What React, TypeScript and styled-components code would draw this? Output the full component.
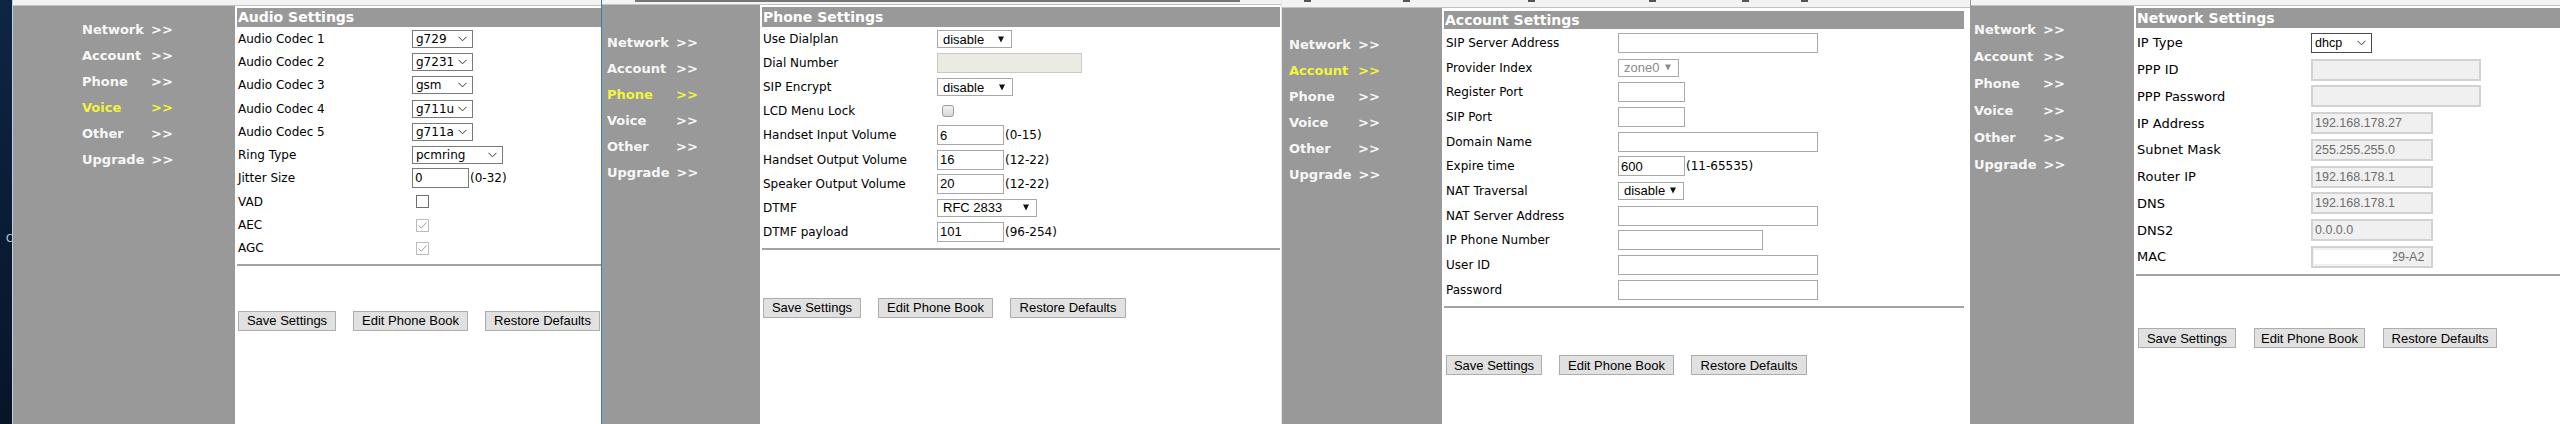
import { FC } from 'react';
import styled, { createGlobalStyle, css } from 'styled-components';

const GlobalStyle = createGlobalStyle`
  html, body {
    margin: 0;
    padding: 0;
    background: #fff;
    overflow: hidden;
  }
  * {
    box-sizing: border-box;
  }
`;

type Look = 'win10' | 'legacy' | 'flat';

type Ctl =
  | { kind: 'select'; value: string; w: number; disabled?: boolean }
  | { kind: 'input'; value?: string; w: number; hint?: string; disabled?: boolean }
  | { kind: 'check'; checked?: boolean; disabled?: boolean }
  | { kind: 'mac'; value: string; w: number };

type Field = { label: string; ctl: Ctl };

type PanelCfg = {
  width: number;
  desktop?: boolean;
  edge: string;
  strip: number;
  marks?: 'bar' | 'ticks';
  sideW: number;
  navTop: number;
  navLeft: number;
  navPitch: number;
  active?: string;
  title: string;
  headTop: number;
  headH: number;
  padRight: number;
  rowsTop: number;
  pitch: number;
  labelPad: number;
  labelW: number;
  font: number;
  ctlFont: string;
  look: Look;
  selH: number;
  inH: number;
  fields: Field[];
  btnTop: number;
  btnPad: number;
  btnW: number[];
  btnGap: number;
};

const Strip = styled.div`
  display: flex;
  width: 2560px;
  height: 424px;
  overflow: hidden;
  font-family: 'DejaVu Sans', Verdana, sans-serif;
`;

const Shot = styled.div<{ $w: number }>`
  flex: none;
  width: ${(p) => p.$w}px;
  height: 424px;
  display: flex;
  overflow: hidden;
`;

const Desktop = styled.div`
  flex: none;
  width: 12px;
  padding-top: 233px;
  background: linear-gradient(180deg, #0e2544 0%, #0a1c35 55%, #071528 100%);
  color: #c9d2de;
  font: 10px 'DejaVu Sans', sans-serif;
  text-indent: 6px;
  white-space: nowrap;
  overflow: hidden;
`;

const Window = styled.div<{ $edge: string }>`
  flex: 1;
  min-width: 0;
  display: flex;
  flex-direction: column;
  border-left: 1px solid ${(p) => p.$edge};
`;

const TitleStrip = styled.div<{ $h: number }>`
  flex: none;
  position: relative;
  height: ${(p) => p.$h}px;
  background: #f3f3f3;
  border-bottom: 1px solid #c2c2c2;
`;

const StripBar = styled.div`
  position: absolute;
  top: 0;
  left: 33px;
  width: 605px;
  height: 2px;
  background: #767676;
`;

const Tick = styled.div<{ $x: number }>`
  position: absolute;
  top: 0;
  left: ${(p) => p.$x}px;
  width: 7px;
  height: 2px;
  background: #555;
`;

const Body = styled.div`
  flex: 1;
  display: flex;
  min-height: 0;
`;

const Sidebar = styled.nav<{ $w: number; $top: number; $left: number }>`
  flex: none;
  width: ${(p) => p.$w}px;
  background: #999999;
  padding-top: ${(p) => p.$top}px;
  padding-left: ${(p) => p.$left}px;
`;

const NavItem = styled.div<{ $h: number; $active: boolean }>`
  height: ${(p) => p.$h}px;
  display: flex;
  align-items: center;
  font-weight: bold;
  font-size: 13px;
  white-space: nowrap;
  color: ${(p) => (p.$active ? '#f4f43a' : '#f7f7f7')};
`;

const NavName = styled.span`
  display: inline-block;
  min-width: 69px;
  padding-right: 7px;
`;

const Content = styled.div<{ $padRight: number }>`
  flex: 1;
  min-width: 0;
  background: #fff;
  padding-left: 2px;
  padding-right: ${(p) => p.$padRight}px;
  display: flex;
  flex-direction: column;
`;

const Header = styled.div<{ $top: number; $h: number }>`
  flex: none;
  margin-top: ${(p) => p.$top}px;
  height: ${(p) => p.$h}px;
  line-height: ${(p) => p.$h}px;
  background: #999999;
  color: #fff;
  font-weight: bold;
  font-size: 14px;
  padding-left: 1px;
  white-space: nowrap;
`;

const Rows = styled.div<{ $top: number; $pad: number }>`
  margin-top: ${(p) => p.$top}px;
  padding-left: ${(p) => p.$pad}px;
`;

const Row = styled.div<{ $h: number }>`
  height: ${(p) => p.$h}px;
  display: flex;
  align-items: center;
`;

const Label = styled.div<{ $w: number; $size: number }>`
  flex: none;
  width: ${(p) => p.$w}px;
  font-size: ${(p) => p.$size}px;
  color: #000;
  white-space: nowrap;
`;

const Cell = styled.div<{ $size: number }>`
  display: flex;
  align-items: center;
  font-size: ${(p) => p.$size}px;
  color: #000;
  white-space: nowrap;
`;

const SelectBox = styled.div<{ $w: number; $h: number; $look: Look; $font: string; $off?: boolean }>`
  width: ${(p) => p.$w}px;
  height: ${(p) => p.$h}px;
  display: flex;
  align-items: center;
  justify-content: space-between;
  gap: 2px;
  background: #fff;
  font-family: ${(p) => p.$font};
  color: ${(p) => (p.$off ? '#8a8a8a' : '#000')};
  ${(p) =>
    p.$look === 'legacy'
      ? css`
          border: 1px solid #a9a9a9;
          padding: 0 7px 0 5px;
          font-size: 13px;
        `
      : css`
          border: 1px solid ${p.$look === 'flat' ? '#4a4a4a' : '#7a7a7a'};
          padding: 0 5px 0 3px;
          font-size: ${p.$look === 'flat' ? '12.5px' : '12px'};
        `}
`;

const TextBox = styled.input<{ $w: number; $h: number; $look: Look; $font: string; $off?: boolean }>`
  width: ${(p) => p.$w}px;
  height: ${(p) => p.$h}px;
  margin: 0;
  padding: 0 2px;
  outline: none;
  font-family: ${(p) => p.$font};
  font-size: ${(p) => (p.$look === 'legacy' ? '13px' : p.$look === 'flat' ? '12.5px' : '12px')};
  color: ${(p) => (p.$off ? '#6d6d6d' : '#000')};
  background: ${(p) => (p.$off ? (p.$look === 'legacy' ? '#ebebe4' : '#f0f0f0') : '#fff')};
  border: 1px solid
    ${(p) => (p.$look === 'win10' ? '#7a7a7a' : p.$off ? '#c8c8c8' : '#a9a9a9')};
  ${(p) =>
    p.$look === 'flat' &&
    css`
      border-width: 2px;
      border-color: #d2d2d2;
    `}
`;

const Hint = styled.span`
  margin-left: 1px;
`;

const MacWrap = styled.div`
  position: relative;
  display: flex;
`;

const Redaction = styled.div`
  position: absolute;
  left: 3px;
  top: 4px;
  width: 79px;
  height: 14px;
  background: #fff;
  filter: blur(0.6px);
`;

const CheckBox = styled.span<{ $look: Look; $off?: boolean }>`
  display: inline-flex;
  align-items: center;
  justify-content: center;
  ${(p) =>
    p.$look === 'legacy'
      ? css`
          width: 12px;
          height: 12px;
          margin-left: 5px;
          border: 1px solid #9a9a9a;
          border-radius: 3px;
          background: linear-gradient(180deg, #f2f2f2, #d9d9d9);
        `
      : css`
          width: 13px;
          height: 13px;
          margin-left: 4px;
          border: 1px solid ${p.$off ? '#bcbcbc' : '#6f6f6f'};
          background: #fff;
        `}
`;

const Divider = styled.div`
  flex: none;
  margin-top: 4px;
  height: 2px;
  background: #a2a2a2;
`;

const ButtonRow = styled.div<{ $top: number; $pad: number; $gap: number }>`
  display: flex;
  gap: ${(p) => p.$gap}px;
  margin-top: ${(p) => p.$top}px;
  padding-left: ${(p) => p.$pad}px;
`;

const Button = styled.button<{ $w: number }>`
  width: ${(p) => p.$w}px;
  height: 20px;
  margin: 0;
  padding: 0;
  border: 1px solid #adadad;
  background: #e1e1e1;
  color: #000;
  font: 13px 'Liberation Sans', Arial, sans-serif;
  white-space: nowrap;
`;

const Chevron: FC<{ look: Look; off?: boolean }> = ({ look, off }) =>
  look === 'legacy' ? (
    <svg width="6" height="7" viewBox="0 0 6 7">
      <path d="M0 0.5 H6 L3 6.5 Z" fill={off ? '#8a8a8a' : '#111'} />
    </svg>
  ) : (
    <svg width="9" height="6" viewBox="0 0 9 6">
      <path d="M0.5 0.8 L4.5 4.8 L8.5 0.8" fill="none" stroke="#333" strokeWidth="1" />
    </svg>
  );

const Control: FC<{ ctl: Ctl; cfg: PanelCfg }> = ({ ctl, cfg }) => {
  if (ctl.kind === 'select') {
    return (
      <SelectBox $w={ctl.w} $h={cfg.selH} $look={cfg.look} $font={cfg.ctlFont} $off={ctl.disabled}>
        <span>{ctl.value}</span>
        <Chevron look={cfg.look} off={ctl.disabled} />
      </SelectBox>
    );
  }
  if (ctl.kind === 'input') {
    return (
      <>
        <TextBox
          $w={ctl.w}
          $h={cfg.inH}
          $look={cfg.look}
          $font={cfg.ctlFont}
          $off={ctl.disabled}
          value={ctl.value ?? ''}
          readOnly
        />
        {ctl.hint && <Hint>{ctl.hint}</Hint>}
      </>
    );
  }
  if (ctl.kind === 'mac') {
    // mac address is blanked out in the original, only the tail shows
    return (
      <MacWrap>
        <TextBox
          $w={ctl.w}
          $h={cfg.inH}
          $look={cfg.look}
          $font={cfg.ctlFont}
          $off
          value={ctl.value}
          readOnly
          style={{ textIndent: 76 }}
        />
        <Redaction />
      </MacWrap>
    );
  }
  return (
    <CheckBox $look={cfg.look} $off={ctl.disabled}>
      {ctl.checked && (
        <svg width="11" height="11" viewBox="0 0 11 11">
          <path d="M1.5 5.5 L4.2 8.2 L9.5 2.5" fill="none" stroke="#a0a0a0" strokeWidth="1" />
        </svg>
      )}
    </CheckBox>
  );
};

const NAV = ['Network', 'Account', 'Phone', 'Voice', 'Other', 'Upgrade'];
const TICKS = [22, 121, 246, 367, 460, 519];
const BUTTONS = ['Save Settings', 'Edit Phone Book', 'Restore Defaults'];

const Panel: FC<{ cfg: PanelCfg }> = ({ cfg }) => (
  <Shot $w={cfg.width}>
    {cfg.desktop && <Desktop>C</Desktop>}
    <Window $edge={cfg.edge}>
      <TitleStrip $h={cfg.strip}>
        {cfg.marks === 'bar' && <StripBar />}
        {cfg.marks === 'ticks' && TICKS.map((x) => <Tick key={x} $x={x} />)}
      </TitleStrip>
      <Body>
        <Sidebar $w={cfg.sideW} $top={cfg.navTop} $left={cfg.navLeft}>
          {NAV.map((n) => (
            <NavItem key={n} $h={cfg.navPitch} $active={n === cfg.active}>
              <NavName>{n}</NavName>
              &gt;&gt;
            </NavItem>
          ))}
        </Sidebar>
        <Content $padRight={cfg.padRight}>
          <Header $top={cfg.headTop} $h={cfg.headH}>
            {cfg.title}
          </Header>
          <Rows $top={cfg.rowsTop} $pad={cfg.labelPad}>
            {cfg.fields.map((f) => (
              <Row key={f.label} $h={cfg.pitch}>
                <Label $w={cfg.labelW} $size={cfg.font}>
                  {f.label}
                </Label>
                <Cell $size={cfg.font}>
                  <Control ctl={f.ctl} cfg={cfg} />
                </Cell>
              </Row>
            ))}
          </Rows>
          <Divider />
          <ButtonRow $top={cfg.btnTop} $pad={cfg.btnPad} $gap={cfg.btnGap}>
            {BUTTONS.map((b, i) => (
              <Button key={b} $w={cfg.btnW[i]}>
                {b}
              </Button>
            ))}
          </ButtonRow>
        </Content>
      </Body>
    </Window>
  </Shot>
);

const VERDANA = "'DejaVu Sans', Verdana, sans-serif";
const ARIAL = "'Liberation Sans', Arial, sans-serif";

const PANELS: PanelCfg[] = [
  {
    width: 601,
    desktop: true,
    edge: '#c3cfdd',
    strip: 6,
    sideW: 222,
    navTop: 10,
    navLeft: 69,
    navPitch: 26,
    active: 'Voice',
    title: 'Audio Settings',
    headTop: 2,
    headH: 19,
    padRight: 0,
    rowsTop: 0,
    pitch: 23.3,
    labelPad: 1,
    labelW: 174,
    font: 12,
    ctlFont: VERDANA,
    look: 'win10',
    selH: 18,
    inH: 20,
    fields: [
      { label: 'Audio Codec 1', ctl: { kind: 'select', value: 'g729', w: 61 } },
      { label: 'Audio Codec 2', ctl: { kind: 'select', value: 'g7231', w: 61 } },
      { label: 'Audio Codec 3', ctl: { kind: 'select', value: 'gsm', w: 61 } },
      { label: 'Audio Codec 4', ctl: { kind: 'select', value: 'g711u', w: 61 } },
      { label: 'Audio Codec 5', ctl: { kind: 'select', value: 'g711a', w: 61 } },
      { label: 'Ring Type', ctl: { kind: 'select', value: 'pcmring', w: 91 } },
      { label: 'Jitter Size', ctl: { kind: 'input', value: '0', w: 57, hint: '(0-32)' } },
      { label: 'VAD', ctl: { kind: 'check' } },
      { label: 'AEC', ctl: { kind: 'check', checked: true, disabled: true } },
      { label: 'AGC', ctl: { kind: 'check', checked: true, disabled: true } },
    ],
    btnTop: 45,
    btnPad: 1,
    btnW: [98, 115, 115],
    btnGap: 17,
  },
  {
    width: 680,
    edge: '#3d7ab8',
    strip: 5,
    marks: 'bar',
    sideW: 158,
    navTop: 24,
    navLeft: 5,
    navPitch: 26,
    active: 'Phone',
    title: 'Phone Settings',
    headTop: 2,
    headH: 20,
    padRight: 1,
    rowsTop: 0,
    pitch: 24.1,
    labelPad: 1,
    labelW: 174,
    font: 12,
    ctlFont: ARIAL,
    look: 'legacy',
    selH: 18,
    inH: 20,
    fields: [
      { label: 'Use Dialplan', ctl: { kind: 'select', value: 'disable', w: 75 } },
      { label: 'Dial Number', ctl: { kind: 'input', w: 145, disabled: true } },
      { label: 'SIP Encrypt', ctl: { kind: 'select', value: 'disable', w: 76 } },
      { label: 'LCD Menu Lock', ctl: { kind: 'check' } },
      { label: 'Handset Input Volume', ctl: { kind: 'input', value: '6', w: 67, hint: '(0-15)' } },
      { label: 'Handset Output Volume', ctl: { kind: 'input', value: '16', w: 67, hint: '(12-22)' } },
      { label: 'Speaker Output Volume', ctl: { kind: 'input', value: '20', w: 67, hint: '(12-22)' } },
      { label: 'DTMF', ctl: { kind: 'select', value: 'RFC 2833', w: 100 } },
      { label: 'DTMF payload', ctl: { kind: 'input', value: '101', w: 67, hint: '(96-254)' } },
    ],
    btnTop: 48,
    btnPad: 1,
    btnW: [98, 115, 116],
    btnGap: 17,
  },
  {
    width: 689,
    edge: '#e6e6e6',
    strip: 8,
    marks: 'ticks',
    sideW: 160,
    navTop: 23,
    navLeft: 7,
    navPitch: 26,
    active: 'Account',
    title: 'Account Settings',
    headTop: 3,
    headH: 18,
    padRight: 6,
    rowsTop: 1.5,
    pitch: 24.7,
    labelPad: 2,
    labelW: 172,
    font: 12,
    ctlFont: ARIAL,
    look: 'legacy',
    selH: 18,
    inH: 20,
    fields: [
      { label: 'SIP Server Address', ctl: { kind: 'input', w: 200 } },
      { label: 'Provider Index', ctl: { kind: 'select', value: 'zone0', w: 61, disabled: true } },
      { label: 'Register Port', ctl: { kind: 'input', w: 67 } },
      { label: 'SIP Port', ctl: { kind: 'input', w: 67 } },
      { label: 'Domain Name', ctl: { kind: 'input', w: 200 } },
      { label: 'Expire time', ctl: { kind: 'input', value: '600', w: 67, hint: '(11-65535)' } },
      { label: 'NAT Traversal', ctl: { kind: 'select', value: 'disable', w: 66 } },
      { label: 'NAT Server Address', ctl: { kind: 'input', w: 200 } },
      { label: 'IP Phone Number', ctl: { kind: 'input', w: 145 } },
      { label: 'User ID', ctl: { kind: 'input', w: 200 } },
      { label: 'Password', ctl: { kind: 'input', w: 200 } },
    ],
    btnTop: 47,
    btnPad: 2,
    btnW: [96, 115, 116],
    btnGap: 17,
  },
  {
    width: 590,
    edge: '#999999',
    strip: 6,
    sideW: 163,
    navTop: 10,
    navLeft: 3,
    navPitch: 27,
    title: 'Network Settings',
    headTop: 2,
    headH: 20,
    padRight: 0,
    rowsTop: 1.6,
    pitch: 26.75,
    labelPad: 1,
    labelW: 174,
    font: 13,
    ctlFont: ARIAL,
    look: 'flat',
    selH: 20,
    inH: 22,
    fields: [
      { label: 'IP Type', ctl: { kind: 'select', value: 'dhcp', w: 61 } },
      { label: 'PPP ID', ctl: { kind: 'input', w: 170, disabled: true } },
      { label: 'PPP Password', ctl: { kind: 'input', w: 170, disabled: true } },
      { label: 'IP Address', ctl: { kind: 'input', value: '192.168.178.27', w: 122, disabled: true } },
      { label: 'Subnet Mask', ctl: { kind: 'input', value: '255.255.255.0', w: 122, disabled: true } },
      { label: 'Router IP', ctl: { kind: 'input', value: '192.168.178.1', w: 122, disabled: true } },
      { label: 'DNS', ctl: { kind: 'input', value: '192.168.178.1', w: 122, disabled: true } },
      { label: 'DNS2', ctl: { kind: 'input', value: '0.0.0.0', w: 122, disabled: true } },
      { label: 'MAC', ctl: { kind: 'mac', value: '29-A2', w: 122 } },
    ],
    btnTop: 52,
    btnPad: 2,
    btnW: [98, 111, 114],
    btnGap: 18,
  },
];

const App: FC = () => (
  <>
    <GlobalStyle />
    <Strip>
      {PANELS.map((p) => (
        <Panel key={p.title} cfg={p} />
      ))}
    </Strip>
  </>
);

export default App;
